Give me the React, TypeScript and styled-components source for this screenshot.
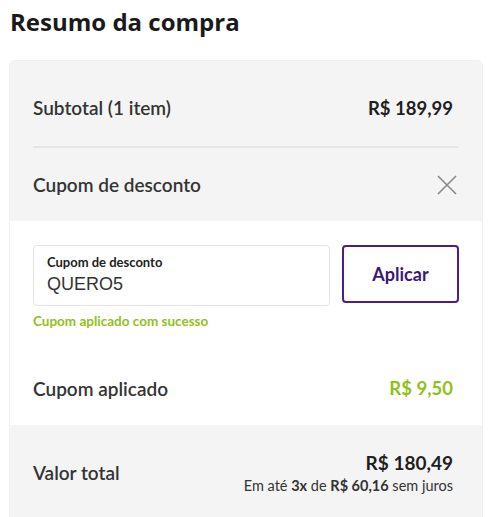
import React, { FC, useState } from 'react';
import styled, { createGlobalStyle } from 'styled-components';

const GlobalStyle = createGlobalStyle`
  body {
    margin: 0;
    background: #fff;
    font-family: 'Lato', 'Noto Sans', sans-serif;
    color: #333;
  }
`;

const App: FC = () => {
  const [coupon, setCoupon] = useState<string>('QUERO5');

  return (
    <>
      <GlobalStyle />
      <Page>
        <Title>Resumo da compra</Title>
        <Card>
          <GraySection>
            <Row $height={85} $top={8}>
              <Label>Subtotal (1 item)</Label>
              <Price>R$ 189,99</Price>
            </Row>
            <Divider />
            <Row $height={73} $top={0}>
              <Label>Cupom de desconto</Label>
              <CloseButton aria-label="Fechar">
                <svg width="20" height="20" viewBox="0 0 20 20">
                  <path d="M1 1 L19 19 M19 1 L1 19" stroke="#888" strokeWidth="1.6" fill="none" />
                </svg>
              </CloseButton>
            </Row>
          </GraySection>
          <WhiteSection>
            <CouponForm>
              <Field>
                <FieldLabel>Cupom de desconto</FieldLabel>
                <FieldInput value={coupon} onChange={(e) => setCoupon(e.target.value)} />
              </Field>
              <ApplyButton>Aplicar</ApplyButton>
            </CouponForm>
            <Success>Cupom aplicado com sucesso</Success>
            <Row $height={96} $top={22}>
              <Label>Cupom aplicado</Label>
              <Price $green>R$ 9,50</Price>
            </Row>
          </WhiteSection>
          <TotalSection>
            <Label>Valor total</Label>
            <TotalBox>
              <TotalPrice>R$ 180,49</TotalPrice>
              <Installments>
                Em até <b>3x</b> de <b>R$ 60,16</b> sem juros
              </Installments>
            </TotalBox>
          </TotalSection>
        </Card>
      </Page>
    </>
  );
};
export default App;

const Page = styled.div`
  padding: 3px 17px 0 9px;
`;

const Title = styled.h1`
  margin: 0 0 19px 1px;
  font-family: 'Open Sans', sans-serif;
  font-weight: 700;
  font-size: 24px;
  line-height: 38px;
  color: #1a1a1a;
`;

const Card = styled.div`
  background: #f4f4f4;
  border: 1px solid #f0f0f0;
  border-radius: 6px 6px 0 0;
  overflow: hidden;
`;

const GraySection = styled.div`
  padding: 0 23px;
`;

const Row = styled.div<{ $height: number; $top: number }>`
  display: flex;
  align-items: center;
  justify-content: space-between;
  box-sizing: border-box;
  height: ${(p) => p.$height}px;
  padding-top: ${(p) => p.$top}px;
`;

const Divider = styled.div`
  height: 2px;
  background: #e6e6e6;
`;

const Label = styled.span`
  font-size: 19px;
  font-weight: 600;
  color: #333;
`;

const Price = styled.span<{ $green?: boolean }>`
  margin-right: 6px;
  font-size: 18.5px;
  font-weight: 700;
  color: ${(p) => (p.$green ? '#8ec21a' : '#1f1f1f')};
`;

const CloseButton = styled.button`
  display: flex;
  margin-right: 2px;
  border: 0;
  background: none;
  padding: 0;
  cursor: pointer;
`;

const WhiteSection = styled.div`
  background: #fff;
  padding: 24px 23px 0;
`;

const CouponForm = styled.div`
  display: flex;
  gap: 12px;
  align-items: flex-start;
`;

const Field = styled.label`
  flex: 1;
  display: flex;
  flex-direction: column;
  height: 61px;
  box-sizing: border-box;
  padding: 8px 13px 0;
  border: 1px solid #e4e4e4;
  border-radius: 4px;
`;

const FieldLabel = styled.span`
  font-size: 13px;
  font-weight: 700;
  color: #222;
  line-height: 17px;
`;

const FieldInput = styled.input`
  border: 0;
  outline: none;
  padding: 0;
  margin-top: 3px;
  font-family: 'Liberation Sans', sans-serif;
  font-size: 18px;
  color: #333;
  background: transparent;
`;

const ApplyButton = styled.button`
  width: 117px;
  height: 58px;
  border: 2px solid #4b1d8c;
  border-radius: 4px;
  background: #fff;
  color: #3d167a;
  font-family: 'Lato', sans-serif;
  font-size: 18px;
  font-weight: 700;
  cursor: pointer;
`;

const Success = styled.div`
  margin-top: 7px;
  font-size: 13.5px;
  font-weight: 700;
  color: #8ec21a;
`;

const TotalSection = styled.div`
  display: flex;
  align-items: center;
  justify-content: space-between;
  height: 95px;
  padding: 0 23px;
`;

const TotalBox = styled.div`
  display: flex;
  flex-direction: column;
  align-items: flex-end;
  margin-right: 6px;
`;

const TotalPrice = styled.span`
  font-size: 19px;
  font-weight: 700;
  color: #1f1f1f;
  line-height: 26px;
`;

const Installments = styled.span`
  font-size: 14.5px;
  color: #333;
  line-height: 20px;

  b {
    font-weight: 700;
  }
`;
